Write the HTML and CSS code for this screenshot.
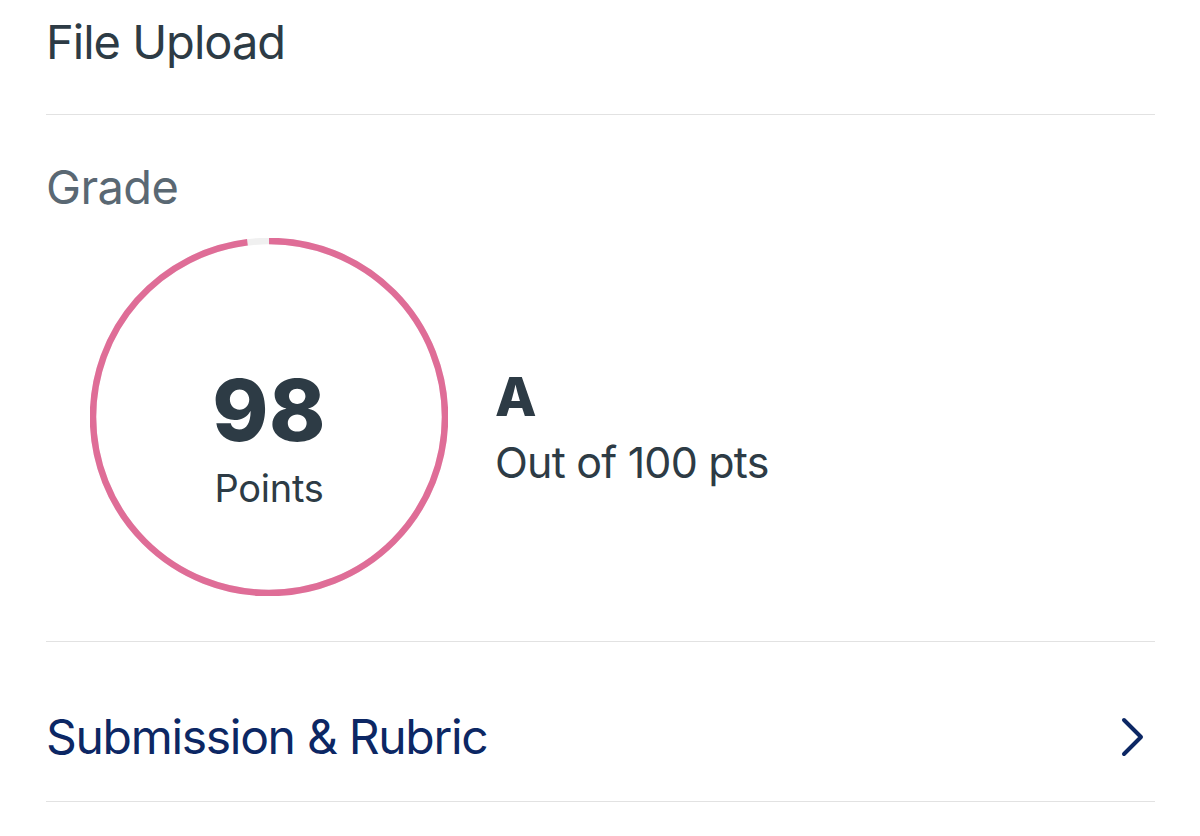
FILE: index.html
```html
<!DOCTYPE html>
<html lang="en">
<head>
<meta charset="utf-8">
<title>Grade</title>
<link rel="stylesheet" href="styles.css">
</head>
<body>
<main class="page">
  <header class="title-row">
    <h1 class="title">File Upload</h1>
  </header>
  <section class="grade-section">
    <h2 class="section-label">Grade</h2>
    <div class="grade-row">
      <div class="ring">
        <svg class="ring-svg" width="358" height="358" viewBox="0 0 358 358" aria-hidden="true">
          <circle class="ring-track" cx="179" cy="179" r="176"/>
          <circle class="ring-fill" cx="179" cy="179" r="176" stroke-dasharray="1083.7 1105.8" transform="rotate(-90 179 179)"/>
        </svg>
        <div class="ring-center">
          <div class="score">98</div>
          <div class="score-unit">Points</div>
        </div>
      </div>
      <div class="grade-info">
        <div class="letter">A</div>
        <div class="out-of">Out of 100 pts</div>
      </div>
    </div>
  </section>
  <a class="nav-row" href="#">
    <span class="nav-label">Submission &amp; Rubric</span>
    <svg class="chevron" width="24" height="40" viewBox="0 0 24 40" aria-hidden="true">
      <path d="M3 3 L20 20 L3 37"/>
    </svg>
  </a>
</main>
</body>
</html>
```
FILE: styles.css
```css
html, body {
  margin: 0;
  padding: 0;
  background: #ffffff;
}
body {
  font-family: Inter, "Noto Sans", sans-serif;
  color: #2d3b45;
}
.page {
  padding: 0 45px 0 46px;
}
.title-row {
  height: 115px;
  box-sizing: border-box;
  border-bottom: 1px solid #e2e2e2;
  padding-top: 18px;
}
.title {
  margin: 0;
  font-size: 47px;
  font-weight: 400;
  line-height: 47px;
  color: #2d3b45;
  letter-spacing: -1px;
}
.grade-section {
  border-bottom: 1px solid #e2e2e2;
  padding-top: 48px;
  padding-bottom: 45px;
}
.section-label {
  margin: 0;
  font-size: 47px;
  font-weight: 400;
  line-height: 47px;
  color: #5a6873;
  letter-spacing: -0.6px;
}
.grade-row {
  display: flex;
  align-items: center;
  margin-top: 28px;
  padding-left: 44px;
}
.ring {
  display: grid;
  width: 358px;
  height: 358px;
  flex: none;
}
.ring-svg, .ring-center {
  grid-area: 1 / 1;
}
.ring-track {
  fill: none;
  stroke: #f0f0f0;
  stroke-width: 6.5;
}
.ring-fill {
  fill: none;
  stroke: #df6d97;
  stroke-width: 6.5;
}
.ring-center {
  display: flex;
  flex-direction: column;
  align-items: center;
  justify-content: center;
  padding-top: 40px;
}
.score {
  font-size: 85px;
  font-weight: 800;
  line-height: 1;
  color: #2d3b45;
  letter-spacing: 0.5px;
}
.score-unit {
  margin-top: 16px;
  font-size: 38px;
  line-height: 1;
  color: #2d3b45;
  letter-spacing: -0.3px;
}
.grade-info {
  margin-left: 47px;
  margin-top: 20px;
}
.letter {
  font-size: 54px;
  font-weight: 800;
  line-height: 1;
  color: #2d3b45;
}
.out-of {
  margin-top: 17px;
  font-size: 43px;
  line-height: 1;
  color: #2d3b45;
  letter-spacing: -0.8px;
}
.nav-row {
  display: flex;
  align-items: center;
  justify-content: space-between;
  height: 160px;
  box-sizing: border-box;
  border-bottom: 1px solid #e2e2e2;
  text-decoration: none;
  padding-top: 30px;
}
.nav-label {
  font-size: 48px;
  line-height: 1;
  color: #0c2764;
  letter-spacing: -1.3px;
}
.chevron {
  margin-right: 10px;
}
.chevron path {
  fill: none;
  stroke: #0c2764;
  stroke-width: 4;
  stroke-linecap: round;
  stroke-linejoin: round;
}
```
